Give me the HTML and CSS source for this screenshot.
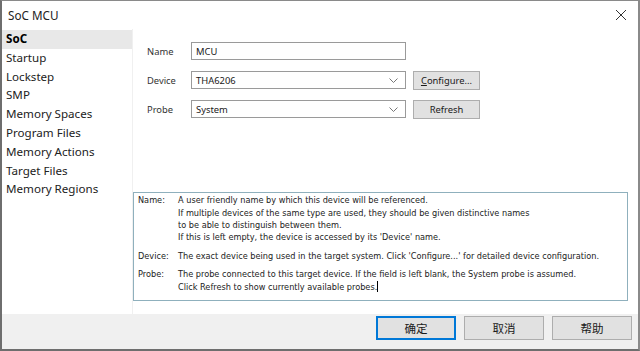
FILE: index.html
```html
<!DOCTYPE html>
<html lang="en">
<head>
    <meta charset="UTF-8">
    <title>SoC MCU</title>
    <link rel="stylesheet" href="styles.css">
</head>
<body>
    <div class="window">
        <div class="titlebar">
            <span class="title">SoC MCU</span>
            <svg class="close" width="12" height="12" viewBox="0 0 12 12">
                <path d="M1 1 L11 11 M11 1 L1 11" stroke="#333" stroke-width="1" fill="none"/>
            </svg>
        </div>

        <div class="main">
            <ul class="sidebar">
                <li class="active">SoC</li>
                <li>Startup</li>
                <li>Lockstep</li>
                <li>SMP</li>
                <li>Memory Spaces</li>
                <li>Program Files</li>
                <li>Memory Actions</li>
                <li>Target Files</li>
                <li>Memory Regions</li>
            </ul>

            <div class="content">
                <div class="form">
                    <div class="row">
                        <label>Name</label>
                        <div class="field">MCU</div>
                    </div>
                    <div class="row">
                        <label>Device</label>
                        <div class="field combo">THA6206
                            <svg width="9" height="5" viewBox="0 0 9 5"><path d="M0.5 0.5 L4.5 4.5 L8.5 0.5" stroke="#777" fill="none"/></svg>
                        </div>
                        <button class="btn"><u>C</u>onfigure...</button>
                    </div>
                    <div class="row">
                        <label>Probe</label>
                        <div class="field combo">System
                            <svg width="9" height="5" viewBox="0 0 9 5"><path d="M0.5 0.5 L4.5 4.5 L8.5 0.5" stroke="#777" fill="none"/></svg>
                        </div>
                        <button class="btn">Refresh</button>
                    </div>
                </div>

                <div class="info">
                    <div class="para">
                        <span class="key">Name:</span>
                        <div class="text">
                            A user friendly name by which this device will be referenced.<br>
                            If multiple devices of the same type are used, they should be given distinctive names<br>
                            to be able to distinguish between them.<br>
                            If this is left empty, the device is accessed by its 'Device' name.
                        </div>
                    </div>
                    <div class="para">
                        <span class="key">Device:</span>
                        <div class="text">The exact device being used in the target system. Click 'Configure...' for detailed device configuration.</div>
                    </div>
                    <div class="para">
                        <span class="key">Probe:</span>
                        <div class="text">
                            The probe connected to this target device. If the field is left blank, the System probe is assumed.<br>
                            Click Refresh to show currently available probes.<span class="caret"></span>
                        </div>
                    </div>
                </div>
            </div>
        </div>

        <div class="footer">
            <button class="btn big default">确定</button>
            <button class="btn big">取消</button>
            <button class="btn big">帮助</button>
        </div>
    </div>
</body>
</html>
```

FILE: styles.css
```css
body {
    margin: 0;
    background-color: #ffffff;
}

.window {
    width: 640px;
    height: 351px;
    box-sizing: border-box;
    display: flex;
    flex-direction: column;
    border: 1px solid #8a8a8a;
    border-left: 2px solid #6e6e6e;
    border-right: 2px solid #8a8a8a;
    border-bottom: 2px solid #6e6e6e;
    font-family: "Noto Sans", sans-serif;
    color: #1a1a1a;
}

.titlebar {
    height: 28px;
    flex-shrink: 0;
    display: flex;
    align-items: center;
    justify-content: space-between;
    padding: 0 11px 0 6px;
    font-size: 11.7px;
    color: #222;
}

.close {
    display: block;
}

.main {
    flex: 1;
    display: flex;
    min-height: 0;
}

.sidebar {
    width: 130px;
    margin: 0;
    padding: 1px 0 0 0;
    list-style: none;
    border-right: 1px solid #f0f0f0;
    font-size: 11.6px;
}

.sidebar li {
    height: 18.8px;
    line-height: 18px;
    padding-left: 4px;
    color: #222;
}

.sidebar li.active {
    background-color: #e8e8e8;
    font-weight: bold;
    color: #000;
}

.content {
    flex: 1;
    display: flex;
    flex-direction: column;
    justify-content: space-between;
    padding: 13px 10px 13px 0;
}

.form {
    display: flex;
    flex-direction: column;
    gap: 11px;
    padding-left: 14px;
    font-size: 9.4px;
}

.row {
    display: flex;
    align-items: center;
    height: 18px;
}

.row label {
    width: 44px;
    color: #333;
}

.field {
    width: 215px;
    height: 18px;
    box-sizing: border-box;
    border: 1px solid #9a9a9a;
    padding: 0 4px;
    display: flex;
    align-items: center;
    justify-content: space-between;
    background-color: #ffffff;
}

.combo svg {
    margin-right: 3px;
}

.btn {
    font-family: "Noto Sans", sans-serif;
    font-size: 9.4px;
    color: #1a1a1a;
    background-color: #e1e1e1;
    border: 1px solid #adadad;
    padding: 0;
    cursor: pointer;
}

.row .btn {
    width: 67px;
    height: 19px;
    margin-left: 7px;
    line-height: 15px;
}

.info {
    border: 1px solid #8fb0bd;
    padding: 1px 4px 7px 4px;
    font-family: "DejaVu Sans Condensed", "DejaVu Sans", sans-serif;
    font-stretch: condensed;
    font-size: 9.1px;
    line-height: 12.4px;
    color: #222;
    display: flex;
    flex-direction: column;
    gap: 6px;
    white-space: nowrap;
}

.para {
    display: flex;
}

.key {
    width: 40px;
    flex-shrink: 0;
}

.caret {
    display: inline-block;
    width: 1px;
    height: 11px;
    background-color: #000;
    vertical-align: -2px;
}

.footer {
    height: 33px;
    flex-shrink: 0;
    display: flex;
    justify-content: flex-end;
    align-items: flex-start;
    gap: 8px;
    padding: 2px 6px 0 0;
    background-color: #f0f0f0;
}

.btn.big {
    width: 80px;
    height: 24px;
    font-family: "Noto Sans CJK SC", sans-serif;
    font-size: 11.5px;
}

.btn.default {
    border: 1px solid #0078d7;
    box-shadow: inset 0 0 0 1px #0078d7;
}
```
